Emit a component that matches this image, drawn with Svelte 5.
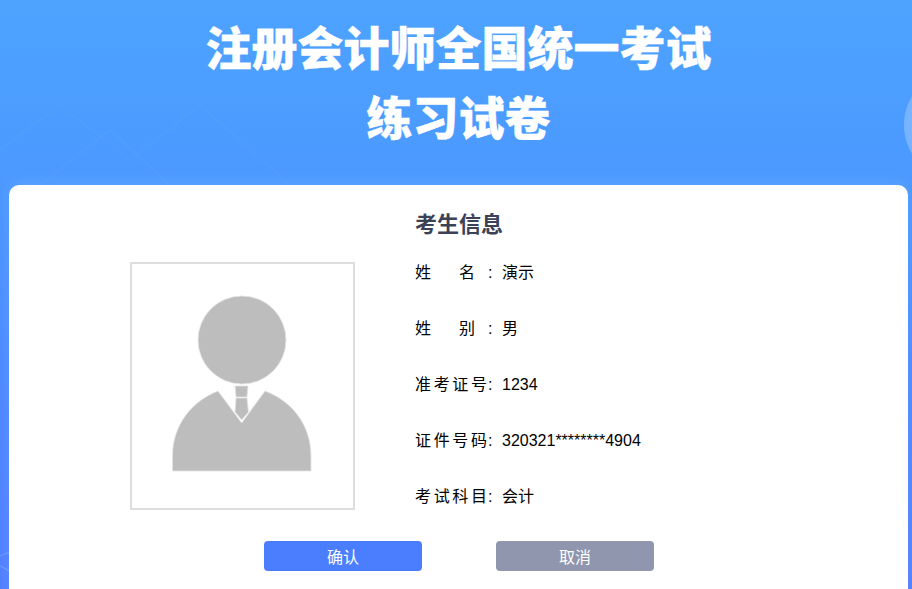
<script lang="ts">
  const rows = [
    { label: ['姓', '名'], value: '演示', short: true },
    { label: ['姓', '别'], value: '男', short: true },
    { label: ['准', '考', '证', '号'], value: '1234', short: false },
    { label: ['证', '件', '号', '码'], value: '320321********4904', short: false },
    { label: ['考', '试', '科', '目'], value: '会计', short: false },
  ];
</script>

<div class="page">
  <svg class="decor" viewBox="0 0 912 589" aria-hidden="true">
    <defs>
      <radialGradient id="orb" cx="0.3" cy="0.5" r="0.7">
        <stop offset="0" stop-color="#ffffff" stop-opacity="0.32" />
        <stop offset="1" stop-color="#ffffff" stop-opacity="0.12" />
      </radialGradient>
    </defs>
    <circle cx="960" cy="125" r="56" fill="url(#orb)" />
    <g stroke="#ffffff" stroke-opacity="0.025" stroke-width="2" fill="none">
      <path d="M0 150 L60 105 L130 160 L200 105 L290 185" />
      <path d="M40 185 L110 130 L170 185" />
    </g>
    <g stroke="#ffffff" stroke-opacity="0.14" stroke-width="1.5" fill="none">
      <path d="M0 556 L10 552" />
      <path d="M0 566 L10 571" />
    </g>
  </svg>

  <div class="content">
    <header class="title">
      <h1>注册会计师全国统一考试</h1>
      <h1>练习试卷</h1>
    </header>

    <main class="card">
      <div class="details">
        <div class="photo">
          <svg viewBox="0 0 221 244" width="221" height="244" aria-label="考生照片">
            <g fill="#bdbdbd" stroke="#e4e4e4" stroke-width="0.8">
              <circle cx="110" cy="76" r="44" />
              <path d="M86 127 L109.7 159 L133 127 C160 137 179 161 179 192 L179 207 L40.5 207 L40.5 192 C40.5 161 60 137 86 127 Z" />
              <path d="M103 122 L116 122 L115 133 L104 133 Z" />
              <path d="M104 134 L115 134 L116.5 148 L109.7 156 L103 148 Z" />
            </g>
          </svg>
        </div>

        <section class="info">
          <h2>考生信息</h2>
          {#each rows as row}
            <div class="row">
              <span class="label" class:short={row.short}>
                {#each row.label as ch}<span>{ch}</span>{/each}
              </span>
              <span class="sep">:</span>
              <span class="value">{row.value}</span>
            </div>
          {/each}
        </section>
      </div>

      <div class="actions">
        <button class="btn primary">确认</button>
        <button class="btn muted">取消</button>
      </div>
    </main>
  </div>
</div>

<style>
  :global(body) {
    margin: 0;
  }

  .page {
    position: relative;
    height: 589px;
    overflow: hidden;
    background: linear-gradient(180deg, #4da3ff 0%, #4b98ff 32%, #4d8aff 62%, #507fff 100%);
    font-family: "Liberation Sans", "Noto Sans CJK SC", sans-serif;
  }

  .decor {
    position: absolute;
    inset: 0;
    width: 912px;
    height: 589px;
  }

  .content {
    position: relative;
    padding: 0 4px 0 9px;
  }

  .title {
    height: 185px;
    padding-top: 10px;
    box-sizing: border-box;
    text-align: center;
    color: #fff;
  }

  h1 {
    margin: 0;
    font-family: "Noto Sans CJK SC", sans-serif;
    font-size: 46px;
    font-weight: 900;
    line-height: 70px;
    -webkit-text-stroke: 0.4px #fff;
  }

  .card {
    height: 420px;
    box-sizing: border-box;
    padding-top: 23px;
    background: #fff;
    border-radius: 10px;
    box-shadow: 0 -3px 14px rgba(255, 255, 255, 0.1);
  }

  .details {
    display: flex;
    align-items: flex-start;
    padding-left: 121px;
    gap: 60px;
  }

  .photo {
    display: flex;
    margin-top: 54px;
    border: 2px solid #dddddd;
  }

  .info {
    display: flex;
    flex-direction: column;
  }

  h2 {
    margin: 0 0 3px;
    font-size: 22px;
    font-weight: 700;
    line-height: 34px;
    color: #3b4257;
  }

  .row {
    display: flex;
    align-items: baseline;
    height: 56px;
    font-size: 16px;
    line-height: 56px;
    color: #000;
  }

  .label {
    display: flex;
    justify-content: space-between;
    width: 72px;
  }

  .label.short {
    width: 60px;
    margin-right: 12px;
  }

  .sep {
    width: 14px;
    margin-left: 1px;
  }

  .actions {
    display: flex;
    justify-content: center;
    gap: 74px;
    margin-top: 16px;
    padding-left: 1px;
  }

  .btn {
    width: 158px;
    height: 30px;
    padding: 0;
    border: 0;
    border-radius: 4px;
    color: #fff;
    font-family: inherit;
    font-size: 16px;
  }

  .primary {
    background: #4a7eff;
  }

  .muted {
    background: #8f96ad;
  }
</style>
